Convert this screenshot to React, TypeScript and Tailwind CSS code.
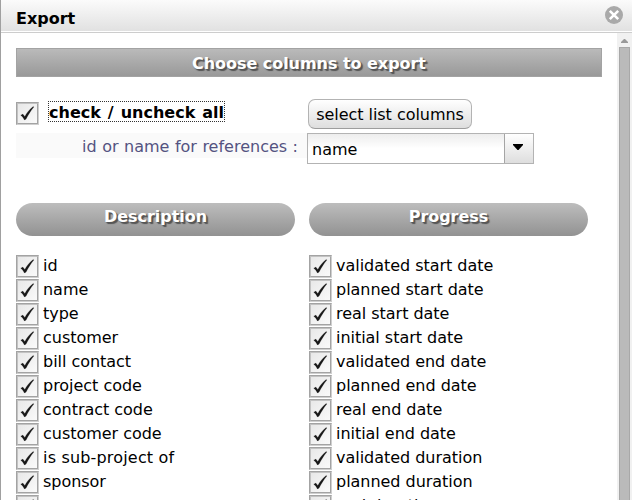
import React from "react";

const description = [
  "id", "name", "type", "customer", "bill contact", "project code",
  "contract code", "customer code", "is sub-project of", "sponsor", "manager",
];

const progress = [
  "validated start date", "planned start date", "real start date", "initial start date",
  "validated end date", "planned end date", "real end date", "initial end date",
  "validated duration", "planned duration", "real duration",
];

function Checkbox() {
  return (
    <span className="flex h-[23px] w-[23px] shrink-0 border border-t-[#a3a3a3] border-l-[#a3a3a3] border-r-[#cfcfcf] border-b-[#cfcfcf]">
      <span className="flex h-[21px] w-[21px] border border-t-[#c2c2c2] border-l-[#c2c2c2] border-r-[#a3a3a3] border-b-[#a3a3a3] bg-linear-to-br from-[#e8e8e8] to-[#fafafa]">
        <svg width="19" height="19" viewBox="0 0 19 19" fill="none">
          <path d="M2.7 11.2 L4.8 10 L6.8 12.4 C8.8 8.6 11.5 5.2 15.2 2.4 L15.9 2.9 C12.8 6.6 10.2 10.8 8 15.2 L6.3 15.9 C5.4 13.9 4.4 12.4 2.7 11.2Z" fill="#181818" stroke="#181818" strokeWidth="0.15" />
        </svg>
      </span>
    </span>
  );
}

function Column({ title, items }: { title: string; items: string[] }) {
  return (
    <section className="w-[279px]">
      <h2 className="h-[33px] rounded-[17px] bg-linear-to-b from-[#bdbdbd] to-[#929292] pt-px text-center text-base leading-[25px] font-bold tracking-[-0.04px] text-white [text-shadow:1px_1px_1px_#555,2px_2px_1px_#555]">
        {title}
      </h2>
      <ul className="mt-[19px]">
        {items.map((item) => (
          <li key={item} className="flex h-6 items-start">
            <Checkbox />
            <span className={`ml-1 leading-[21px] whitespace-nowrap ${item.includes("-") ? "tracking-[0.18px]" : "tracking-[-0.03px]"}`}>
              {item}
            </span>
          </li>
        ))}
      </ul>
    </section>
  );
}

export default function App() {
  return (
    <div className="flex h-[500px] w-[632px] flex-col overflow-hidden border-l border-[#a0a0a0] bg-white font-['DejaVu_Sans',sans-serif] text-base text-black">
      <header className="flex h-[33px] shrink-0 justify-between border-b border-[#cdcdcd] bg-white pb-px">
        <div className="flex h-[31px] w-full justify-between bg-linear-to-b from-[#fbfbfb] to-[#e1e1e1] pr-[9px] pl-[15px]">
          <h1 className="text-base leading-[37px] font-bold">Export</h1>
          <svg className="mt-[6px]" width="18" height="18" viewBox="0 0 18 18">
            <circle cx="9" cy="9" r="9" fill="#a9a9a9" />
            <path d="M4.8 4.8 13.2 13.2M13.2 4.8 4.8 13.2" stroke="#fff" strokeWidth="2.6" />
          </svg>
        </div>
      </header>
      <div className="flex min-h-0 flex-1">
        <main className="min-w-0 flex-1 overflow-hidden pt-[15px] pl-[15px]">
          <div className="h-[29px] w-[586px] border border-[#a3a3a3] bg-linear-to-b from-[#bababa] to-[#999] text-center leading-[29px] font-bold tracking-[-0.04px] text-white [text-shadow:1px_1px_1px_#555,2px_2px_1px_#555]">
            Choose columns to export
          </div>
          <div className="mt-[22px] flex h-[34px]">
            <div className="flex w-[292px] pt-[3px]">
              <Checkbox />
              <span className="-mt-px ml-[9px] h-[21px] border border-dotted border-[#333] leading-[21px] font-bold whitespace-nowrap [word-spacing:1.4px]">
                check / uncheck all
              </span>
            </div>
            <button className="h-[30px] w-[164px] rounded-[7px] border border-[#b3b3b3] border-b-[#9d9d9d] bg-linear-to-b from-white to-[#dedede] leading-[29px] tracking-[-0.04px] whitespace-nowrap">
              select list columns
            </button>
          </div>
          <div className="flex h-[70px] items-start">
            <label className="h-[25px] w-[291px] bg-[#fafafa] pr-[9px] text-right leading-[27px] text-[#545381] [word-spacing:0.4px]">
              id or name for references&nbsp;:
            </label>
            <div className="flex h-[31px] w-[227px] border border-[#b3b3b3]">
              <div className="flex-1 bg-linear-to-b from-[#ededed] to-white to-50% pl-1 leading-[31px]">name</div>
              <div className="flex w-[29px] justify-center border-l border-[#a5a5a5] bg-linear-to-b from-white to-[#dedede] pt-[10px] pr-[2px]">
                <svg width="10" height="6" viewBox="0 0 10 6">
                  <path d="M0 0h10v1L5.5 6h-1L0 1Z" fill="#000" />
                </svg>
              </div>
            </div>
          </div>
          <div className="flex gap-[14px]">
            <Column title="Description" items={description} />
            <Column title="Progress" items={progress} />
          </div>
        </main>
        <aside className="flex w-[15px] shrink-0 flex-col items-center bg-[#f1f1f1] pt-[6px]">
          <svg width="7" height="4" viewBox="0 0 7 4">
            <path d="M3 0h1l3 3v1H0V3Z" fill="#999" />
          </svg>
          <div className="mt-1 w-[11px] flex-1 border border-b-0 border-[#a8a8a8] bg-[#bababa]" />
        </aside>
      </div>
    </div>
  );
}
